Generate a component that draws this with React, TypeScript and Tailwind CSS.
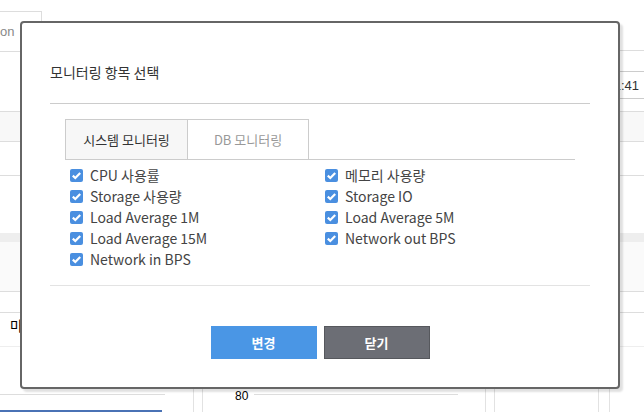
import React from 'react'

const leftItems = ['CPU 사용률', 'Storage 사용량', 'Load Average 1M', 'Load Average 15M', 'Network in BPS']
const rightItems = ['메모리 사용량', 'Storage IO', 'Load Average 5M', 'Network out BPS']

function CheckRow({ label }: { label: string }) {
  return (
    <label className="flex items-center h-[21px] gap-[7px]">
      <span className="w-[13px] h-[13px] rounded-[2px] bg-[#4a8fe0] flex items-center justify-center">
        <svg width="13" height="13" viewBox="0 0 13 13">
          <path d="M2.8 6.6 L5.3 9 L10.2 4" fill="none" stroke="#fff" strokeWidth="2.2" />
        </svg>
      </span>
      <span className="text-[14px] text-[#444] leading-[21px]">{label}</span>
    </label>
  )
}

function SideStrip({ right }: { right?: boolean }) {
  return (
    <div className="flex flex-col">
      {right ? (
        <>
          <div className="h-[51px] border-b border-[#ddd]" />
          <div className="h-[21px] border-b border-[#ccc]" />
          <div className="h-[27px] border-b border-[#ccc] text-right pr-[5px] text-[13px] leading-[27px] text-[#333] font-['Liberation_Sans',sans-serif]">
            11:41
          </div>
          <div className="h-[13px] border-b border-[#ddd]" />
        </>
      ) : (
        <>
          <div className="h-[11px]" />
          <div className="h-[41px] border-t border-r border-b border-[#ddd] text-[13px] leading-[40px] text-[#888] font-['Liberation_Sans',sans-serif]">
            on
          </div>
          <div className="h-[60px] border-b border-[#ddd]" />
        </>
      )}
      <div className="h-[30px] bg-[#f8f8f8] border-b border-[#ddd]" />
      <div className="h-[34px] border-b border-[#ddd]" />
      <div className="h-[57px]" />
      <div className="h-[9px] bg-[#eeeeee]" />
      <div className="h-[50px] bg-[#fafafa] border-b border-[#ddd]" />
      <div className="h-[21px] border-b border-[#ddd]" />
      <div className="h-[34px] border-b border-[#eee] pl-[10px] text-[14px] leading-[24px] text-black">
        {right ? '' : '마'}
      </div>
    </div>
  )
}

export default function App() {
  return (
    <div className="relative w-[644px] h-[412px] overflow-hidden bg-white font-['Noto_Sans_CJK_KR','Noto_Sans',sans-serif]">
      {/* 배경 페이지 */}
      <div className="flex flex-col">
        <div className="h-[389px] flex justify-between">
          <div className="w-[42px]">
            <SideStrip />
          </div>
          <div className="w-[46px]">
            <SideStrip right />
          </div>
        </div>
        <div className="h-[23px] flex font-['Liberation_Sans',sans-serif]">
          <div className="w-[193px] flex flex-col">
            <div className="w-[165px] h-[6px] border-b border-[#ddd]" />
            <div className="flex-1" />
            <div className="w-[162px] h-[2px] bg-[#4a72b5]" />
          </div>
          <div className="w-[9px] border-l border-[#e2e2e2]" />
          <div className="w-[283px] border-l border-[#e2e2e2] flex items-start">
            <span className="ml-[32px] text-[12px] leading-[14px] text-black">80</span>
            <div className="ml-[6px] w-[204px] h-[6px] border-b border-[#ddd]" />
          </div>
          <div className="w-[9px] border-l border-[#e2e2e2]" />
          <div className="w-[104px] border-l border-[#e2e2e2]" />
          <div className="w-[11px] border-l border-[#e2e2e2]" />
          <div className="flex-1 border-l border-[#e2e2e2]" />
        </div>
      </div>

      {/* 모달 */}
      <div className="absolute left-[20px] top-[21px] w-[600px] h-[368px] bg-white border-2 border-[#666] rounded-[4px] shadow-[3px_3px_2px_rgba(0,0,0,0.12)] px-[28px] pt-[39px]">
        <h3 className="text-[14px] leading-[20px] text-[#333]">모니터링 항목 선택</h3>
        <div className="mt-[21px] h-px bg-[#ccc]" />

        <div className="px-[15px] pt-[15px]">
          <div className="flex h-[41px] border-b border-[#ccc]">
            <button className="w-[123px] h-[40px] border border-b-0 border-[#ccc] bg-[#f7f7f7] text-[13px] text-[#333]">
              시스템 모니터링
            </button>
            <button className="w-[121px] h-[40px] border border-l-0 border-b-0 border-[#ccc] bg-white text-[13px] text-[#999]">
              DB 모니터링
            </button>
          </div>
          <div className="grid grid-cols-[255px_255px] pl-[5px] pt-[5px]">
            <div className="flex flex-col">
              {leftItems.map((item) => (
                <CheckRow key={item} label={item} />
              ))}
            </div>
            <div className="flex flex-col">
              {rightItems.map((item) => (
                <CheckRow key={item} label={item} />
              ))}
            </div>
          </div>
        </div>

        <div className="mt-[15px] h-px bg-[#e3e3e3]" />

        <div className="mt-[40px] flex justify-center gap-[7px]">
          <button className="w-[106px] h-[33px] bg-[#4a96e5] text-white text-[13px] font-bold">변경</button>
          <button className="w-[106px] h-[33px] bg-[#6c6e75] border border-[#56585d] text-white text-[13px] font-bold">닫기</button>
        </div>
      </div>
    </div>
  )
}
